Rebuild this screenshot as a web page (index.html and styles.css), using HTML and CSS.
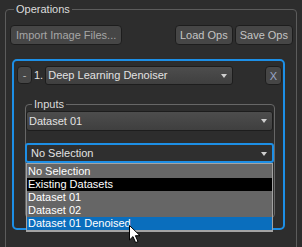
FILE: index.html
```html
<!DOCTYPE html>
<html lang="en">
<head>
  <meta charset="UTF-8" />
  <title>Operations</title>
  <link rel="stylesheet" href="styles.css">
</head>
<body>
<fieldset class="group ops">
  <legend>Operations</legend>
  <div class="toolbar">
    <button class="btn import">Import Image Files...</button>
    <span class="spacer"></span>
    <button class="btn">Load Ops</button>
    <button class="btn">Save Ops</button>
  </div>
  <div class="op-card">
    <div class="op-head">
      <button class="btn mini">-</button>
      <span class="op-num">1.</span>
      <div class="combo op-combo">Deep Learning Denoiser<i class="arrow"></i></div>
      <button class="btn mini close">X</button>
    </div>
    <fieldset class="group inputs">
      <legend>Inputs</legend>
      <div class="combo">Dataset 01<i class="arrow"></i></div>
      <div class="combo-wrap">
        <div class="combo focus">No Selection<i class="arrow"></i></div>
        <ul class="popup">
          <li>No Selection</li>
          <li class="header">Existing Datasets</li>
          <li>Dataset 01</li>
          <li>Dataset 02</li>
          <li class="selected">Dataset 01 Denoised</li>
        </ul>
      </div>
    </fieldset>
  </div>
</fieldset>
<svg class="cursor" width="13" height="19" viewBox="0 0 13 19">
  <path d="M0.5 0.5 L0.5 15 L4 11.6 L6.6 17.6 L9 16.6 L6.4 10.7 L11 10.7 Z" fill="#fff" stroke="#000" stroke-width="1"/>
</svg>
</body>
</html>
```

FILE: styles.css
```css
body {
  margin: 0;
  background: #2d2d2d;
  font-family: 'Liberation Sans', Arial, sans-serif;
  font-size: 11px;
  color: #dedede;
  height: 247px;
  overflow: hidden;
  position: relative;
}
.group {
  border: 1px solid #5c5c5c;
  border-radius: 4px;
  margin: 0;
  min-width: 0;
}
.group legend {
  font-size: 11px;
  line-height: 13px;
  padding: 0 2px;
  color: #dcdcdc;
}
.ops {
  margin: 3px 5px 0 5px;
  padding: 9px 3px 40px 4px;
}
.ops legend {
  margin-left: 4px;
}
.toolbar {
  display: flex;
  gap: 2px;
}
.spacer {
  flex: 1;
}
.btn {
  height: 20px;
  padding: 0 4px;
  font-family: inherit;
  font-size: 11px;
  color: #c4c4c4;
  background: #464646;
  border: 1px solid #1d1d1d;
  border-radius: 4px;
}
.btn.import {
  padding: 0 5px;
  color: #a6a6a6;
}
.op-card {
  margin: 14px 8px 0 2px;
  border: 2px solid #1d8fe6;
  border-radius: 5px;
  padding: 5px 1px 10px 3px;
}
.op-head {
  display: flex;
  align-items: flex-start;
}
.btn.mini {
  height: 18px;
  width: 15px;
  padding: 0;
  color: #b8b8b8;
}
.btn.close {
  width: 17px;
  height: 19px;
  margin-left: auto;
  color: #9aa6c8;
}
.op-num {
  margin: 0 2px 0 2px;
  line-height: 19px;
  color: #e0e0e0;
}
.combo {
  position: relative;
  height: 20px;
  line-height: 18px;
  padding-left: 2px;
  background: linear-gradient(#4d4d4d, #3f3f3f);
  border: 1px solid #1d1d1d;
  border-radius: 3px;
  color: #e2e2e2;
  box-sizing: border-box;
}
.op-combo {
  width: 188px;
  height: 19px;
  line-height: 17px;
}
.arrow {
  position: absolute;
  right: 5px;
  top: 7px;
  border-left: 3.5px solid transparent;
  border-right: 3.5px solid transparent;
  border-top: 4px solid #cfcfcf;
}
.inputs {
  margin: 13px 7px 0 8px;
  padding: 0 1px 54px 0;
  border-color: #676767;
}
.inputs legend {
  margin-left: 6px;
}
.combo-wrap {
  position: relative;
  margin: 12px -1px 0 -1px;
}
.combo.focus {
  background: #2f2f2f;
  border: 2px solid #1d8fe6;
  padding-left: 4px;
  line-height: 16px;
}
.popup {
  position: absolute;
  top: 100%;
  left: 1px;
  right: 1px;
  margin: 0;
  padding: 0;
  list-style: none;
  background: #666;
  border: 1px solid #a3a3a3;
  border-bottom-width: 2px;
  z-index: 2;
}
.popup li {
  height: 13px;
  line-height: 13px;
  padding-left: 1px;
  color: #fff;
}
.popup li:first-child {
  height: 14px;
  line-height: 15px;
}
.popup .header {
  background: #000;
}
.popup .selected {
  background: #0a6ebd;
}
.cursor {
  position: absolute;
  left: 129px;
  top: 225px;
  z-index: 3;
}
```
